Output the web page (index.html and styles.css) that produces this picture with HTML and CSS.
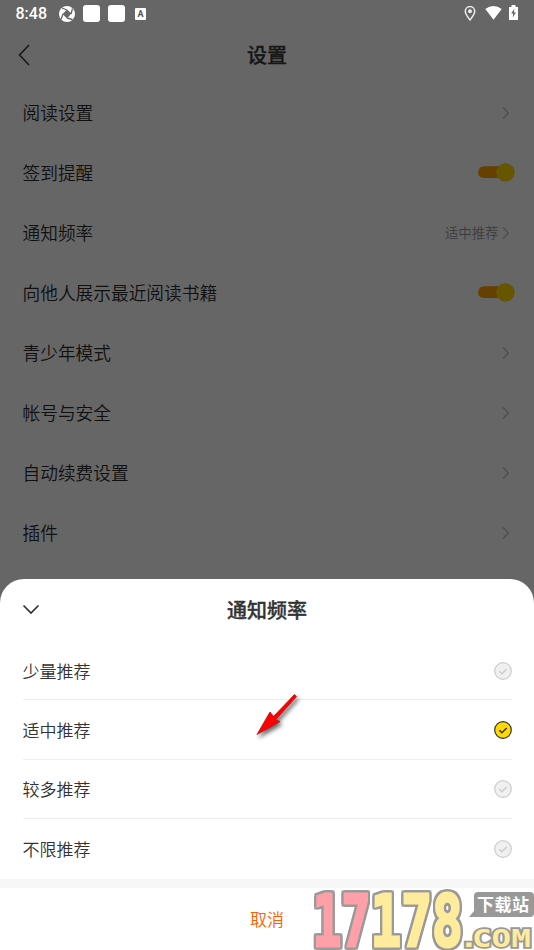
FILE: index.html
```html
<!DOCTYPE html>
<html lang="zh-CN">
<head>
<meta charset="utf-8">
<title>设置</title>
<link rel="stylesheet" href="styles.css">
</head>
<body>
<div class="screen">
  <div class="status">
    <span class="time">8:48</span>
    <svg class="aperture" width="16" height="16" viewBox="0 0 16 16"><circle cx="8" cy="8" r="8" fill="#fff"/><path d="m8 3.500 4.500 4L8 12.500 3.500 8z" fill="#666"/><path d="M8 4 3 2M12 8 13.500 2.500M8 12 13.500 13.500M4 8 2 13.500" stroke="#666" stroke-width="1.300"/></svg>
    <i class="tile"></i><i class="tile"></i>
    <span class="letter">A</span>
    <svg class="pin" width="12" height="15" viewBox="0 0 12 15" fill="none" stroke="#eee" stroke-width="1.500"><path d="M6 14C3.500 10.800 1.300 8.200 1.300 5.300a4.700 4.700 0 0 1 9.400 0C10.700 8.200 8.500 10.800 6 14z"/><circle cx="6" cy="5.300" r="1.200" fill="#eee"/></svg>
    <svg class="wifi" width="17" height="14" viewBox="0 0 17 14"><path d="M.3 3Q8.500-2.800 16.700 3L8.500 13.800z" fill="#fff"/></svg>
    <svg class="battery" width="9" height="15" viewBox="0 0 9 15"><path d="M0 2h2.500V0h4v2H9v13H0z" fill="#fff"/><path d="M5.300 3.500 2.200 8.500h2L3.700 12.500 7 7.500H5z" fill="#666"/></svg>
  </div>
  <header class="bar">
    <svg class="back" width="12" height="22" viewBox="0 0 12 22"><path d="M11 1 1.500 11 11 21"/></svg>
    <h1>设置</h1>
  </header>
  <ul class="settings">
    <li><span>阅读设置</span><svg class="go" width="8" height="12" viewBox="0 0 8 12"><path d="m1 .5 5.500 5.500L1 11.500"/></svg></li>
    <li><span>签到提醒</span><i class="switch"></i></li>
    <li><span>通知频率</span><em>适中推荐</em><svg class="go" width="8" height="12" viewBox="0 0 8 12"><path d="m1 .5 5.500 5.500L1 11.500"/></svg></li>
    <li><span>向他人展示最近阅读书籍</span><i class="switch"></i></li>
    <li><span>青少年模式</span><svg class="go" width="8" height="12" viewBox="0 0 8 12"><path d="m1 .5 5.500 5.500L1 11.500"/></svg></li>
    <li><span>帐号与安全</span><svg class="go" width="8" height="12" viewBox="0 0 8 12"><path d="m1 .5 5.500 5.500L1 11.500"/></svg></li>
    <li><span>自动续费设置</span><svg class="go" width="8" height="12" viewBox="0 0 8 12"><path d="m1 .5 5.500 5.500L1 11.500"/></svg></li>
    <li><span>插件</span><svg class="go" width="8" height="12" viewBox="0 0 8 12"><path d="m1 .5 5.500 5.500L1 11.500"/></svg></li>
  </ul>
  <section class="sheet">
    <div class="sheet-head">
      <svg class="down" width="18" height="11" viewBox="0 0 18 11"><path d="m1.500 1.500 7.500 7.500 7.500-7.500"/></svg>
      <h2>通知频率</h2>
    </div>
    <ul class="options">
      <li><span>少量推荐</span><svg class="check" width="18" height="18" viewBox="0 0 18 18"><circle cx="9" cy="9" r="8.300"/><path d="m5.300 9.200 2.600 2.500L12.700 7"/></svg></li>
      <li><span>适中推荐</span><svg class="check on" width="18" height="18" viewBox="0 0 18 18"><circle cx="9" cy="9" r="8.300"/><path d="m5.300 9.200 2.600 2.500L12.700 7"/></svg></li>
      <li><span>较多推荐</span><svg class="check" width="18" height="18" viewBox="0 0 18 18"><circle cx="9" cy="9" r="8.300"/><path d="m5.300 9.200 2.600 2.500L12.700 7"/></svg></li>
      <li><span>不限推荐</span><svg class="check" width="18" height="18" viewBox="0 0 18 18"><circle cx="9" cy="9" r="8.300"/><path d="m5.300 9.200 2.600 2.500L12.700 7"/></svg></li>
    </ul>
    <div class="cancel">取消</div>
  </section>
  <svg class="arrow" width="60" height="60" viewBox="250 685 60 60"><path d="M257 734.500 270 712 273.500 716.500 294.500 694.500 296.500 696.500 275.500 720 280 721.500z" fill="#f00" stroke="#b51212" stroke-width=".8"/></svg>
  <svg class="mark" width="224" height="62" viewBox="310 888 224 62">
    <g class="digits">
      <text class="red" transform="translate(312.500 945.500) scale(.68 1)">17</text>
      <text class="yellow" transform="translate(370.500 945.500) scale(.72 1)">178</text>
    </g>
    <text class="com" transform="translate(459 946.500) scale(1.300 1)">.<tspan dx="-5">COM</tspan></text>
    <path d="M469 917 474 911V896q0-4 4-4H530q4 0 4 4V913q0 4-4 4z" fill="#999"/>
    <text class="label" x="477" y="910.500" textLength="52">下载站</text>
  </svg>
</div>
</body>
</html>
```
FILE: styles.css
```css
* { box-sizing: border-box; }
body { margin: 0; font-family: "Noto Sans CJK SC", sans-serif; }
ul { list-style: none; margin: 0; padding: 0; }
h1, h2 { margin: 0; font-weight: 500; font-size: 20px; line-height: 30px; -webkit-text-stroke: .35px currentColor; }
svg { display: block; flex: none; }
.screen { position: relative; width: 534px; height: 950px; overflow: hidden; background: #666; display: flex; flex-direction: column; }
.status { height: 27px; flex: none; display: flex; align-items: center; padding-left: 15.500px; color: #fff; }
.time { width: 43.500px; font: 500 16px/27px Roboto, sans-serif; }
.aperture { margin-right: 8px; }
.tile { width: 17px; height: 17px; border-radius: 3px; background: #fff; margin-right: 7.500px; }
.letter { width: 11px; height: 12px; margin-left: 3px; background: #fff; color: #555; font: bold 9px/12px Roboto, sans-serif; text-align: center; border-radius: 1px; }
.pin { margin-left: auto; margin-right: 9px; }
.wifi { margin-right: 7px; margin-top: -2px; }
.battery { margin-right: 16px; margin-top: -2px; }
.bar { height: 56px; flex: none; display: grid; grid-template-columns: 60px 1fr 60px; align-items: center; text-align: center; color: #171717; }
.back { margin-left: 18px; margin-top: -1px; fill: none; stroke: #171717; stroke-width: 1.500; }
.settings { height: 496px; flex: none; }
.settings li { height: 60.100px; display: flex; align-items: center; padding: 0 24px 0 22.500px; font-size: 17.700px; font-weight: 350; line-height: 26px; color: #101010; }
.settings span { flex: 1; margin-top: -2.500px; }
.settings em { font-style: normal; font-size: 13.400px; color: #3c3c3c; margin: -2px 3.500px 0 0; }
.go { fill: none; stroke: #4d4d4d; stroke-width: 1.200; margin-top: -1px; }
.switch { width: 37px; height: 19px; margin-right: -5px; margin-top: -2px; background: radial-gradient(circle at 27.500px 9.500px, #665600 9px, transparent 9.500px), linear-gradient(#664000, #664000) 0 3.500px / 100% 12px no-repeat; border-radius: 9.500px; clip-path: path("M6 3.500H20A9.500 9.500 0 1 1 20 15.500H6A6 6 0 0 1 6 3.500z"); }
.sheet { height: 371px; flex: none; background: #fff; border-radius: 24px 24px 0 0; color: #333; }
.sheet-head { height: 62px; display: grid; grid-template-columns: 60px 1fr 60px; align-items: center; text-align: center; }
.down { margin-left: 22px; margin-top: -1px; fill: none; stroke: #333; stroke-width: 1.700; }
.options { height: 238px; padding: 0 22px 0 22.500px; }
.options li { height: 59.400px; display: flex; align-items: center; justify-content: space-between; font-size: 17px; font-weight: 350; line-height: 26px; border-bottom: 1px solid #eee; padding-top: 1px; }
.options li:last-child { border-bottom: 0; padding: 0; }
.check { fill: #f0f0f0; stroke: #ccc; stroke-width: 1.200; }
.check path { fill: none; stroke-width: 1.500; }
.check.on { fill: #ffd800; stroke: #333; }
.cancel { height: 71px; border-top: 9px solid #f7f7f7; padding-bottom: 1px; display: flex; align-items: center; justify-content: center; font-size: 17px; font-weight: 350; color: #ff6000; }
.arrow { position: absolute; left: 250px; top: 685px; filter: drop-shadow(2px 3px 2px rgba(0,0,0,.6)); }
.mark { position: absolute; left: 310px; top: 888px; }
.digits { font: bold 71px "DejaVu Sans Mono", monospace; filter: drop-shadow(2px 0 #999) drop-shadow(-2px 0 #999) drop-shadow(0 2px #999) drop-shadow(0 -2px #999); }
.red { fill: #ffa0a8; stroke: #ffa0a8; stroke-width: 3px; }
.yellow { fill: #ffeb9c; stroke: #ffeb9c; stroke-width: 3px; }
.com { font: bold 25px "DejaVu Sans Mono", monospace; fill: #ffeb9c; stroke: #999; stroke-width: 3.500px; paint-order: stroke; }
.label { font: bold 17px "Noto Sans CJK SC", sans-serif; fill: #fff; }
```
